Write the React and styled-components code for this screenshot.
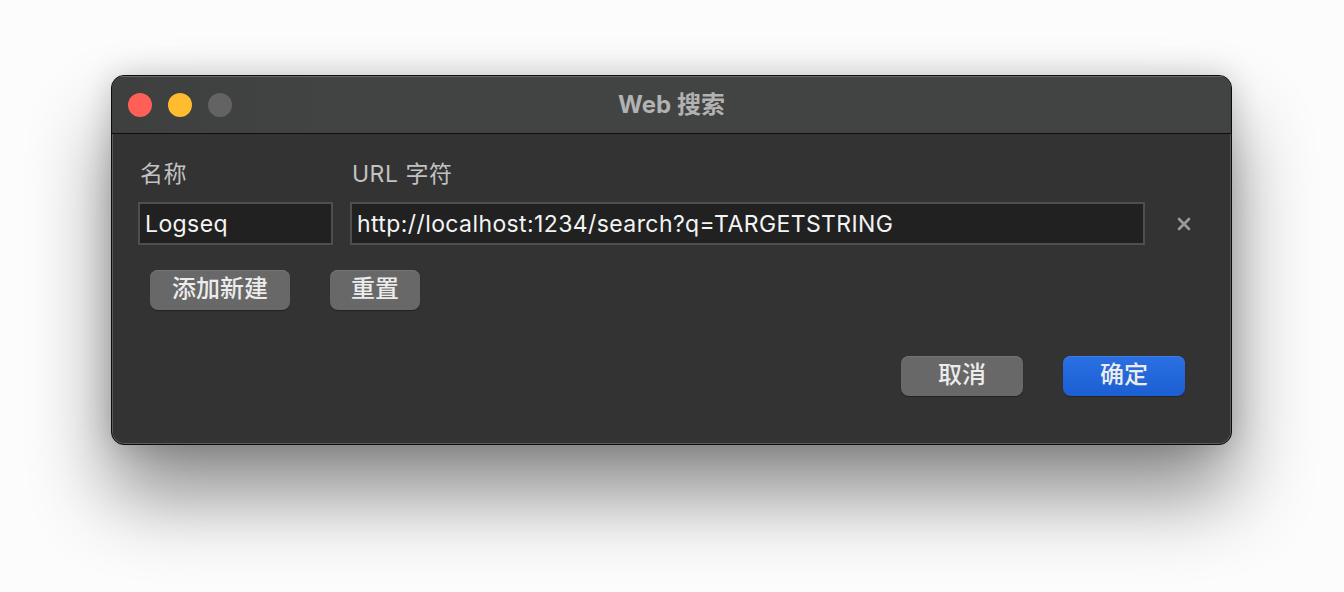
import React from 'react'
import styled, { createGlobalStyle } from 'styled-components'

const GlobalStyle = createGlobalStyle`
    body {
        margin: 0;
        background: #fcfcfc;
        font-family: Inter, "Noto Sans CJK SC", sans-serif;
    }
`

const Page = styled.div`
    width: 1344px;
    height: 592px;
    padding: 75px 0 0 111px;
    box-sizing: border-box;
    overflow: hidden;
`

const Window = styled.div`
    width: 1121px;
    height: 370px;
    box-sizing: border-box;
    border: 1px solid #0c0c0c;
    border-radius: 13px;
    background: #333333;
    box-shadow: inset 0 0 0 1px #5c5c5c, 0 50px 80px rgba(0, 0, 0, 0.45), 0 0 30px rgba(0, 0, 0, 0.18);
    display: flex;
    flex-direction: column;
    overflow: hidden;
`

const TitleBar = styled.div`
    height: 56px;
    flex-shrink: 0;
    display: flex;
    align-items: center;
    padding-left: 16px;
    background: linear-gradient(90deg, #3e3f3f, #424443 20%, #424443);
    border-top: 1px solid #6a6a6a;
    border-bottom: 1px solid #0e0e0e;
    position: relative;
`

const Lights = styled.div`
    display: flex;
    gap: 16px;
`

const Light = styled.span`
    width: 24px;
    height: 24px;
    border-radius: 50%;
    background: ${p => p.color};
`

const Title = styled.div`
    position: absolute;
    left: 0;
    right: 0;
    padding-bottom: 6px;
    text-align: center;
    font-size: 24px;
    font-weight: 700;
    color: #b2b2b2;
    pointer-events: none;
`

const Body = styled.div`
    flex: 1;
    padding: 27px 0 0 26px;
    display: flex;
    flex-direction: column;
`

const FieldRow = styled.div`
    display: flex;
    align-items: flex-end;
`

const Field = styled.div`
    display: flex;
    flex-direction: column;
    gap: 14px;
    margin-right: 17px;
`

const Label = styled.div`
    font-size: 23px;
    line-height: 27px;
    letter-spacing: 0.5px;
    color: #c2c2c2;
    padding-left: 2px;
`

const Input = styled.div`
    width: ${p => p.w}px;
    height: 43px;
    box-sizing: border-box;
    background: #212121;
    border: 2px solid #4f4f4f;
    color: #f4f4f4;
    font-size: 23px;
    letter-spacing: 0.4px;
    display: flex;
    align-items: center;
    padding-left: 5px;
`

const Remove = styled.div`
    width: 22px;
    height: 43px;
    display: flex;
    align-items: center;
    justify-content: center;
    margin-left: 11px;
    color: #9b9b9b;
`

const ButtonRow = styled.div`
    display: flex;
    gap: 40px;
    padding-left: ${p => p.indent || 0}px;
    margin-top: ${p => p.top}px;
    justify-content: ${p => p.end ? 'flex-end' : 'flex-start'};
    padding-right: ${p => p.end ? 46 : 0}px;
`

const Button = styled.div`
    width: ${p => p.w}px;
    height: 40px;
    box-sizing: border-box;
    border-radius: 8px;
    display: flex;
    align-items: center;
    justify-content: center;
    font-size: 24px;
    font-weight: 500;
    line-height: 1;
    padding-bottom: 2px;
    color: #ececec;
    background: ${p => p.primary ? 'linear-gradient(180deg, #2b70e2, #1b5fd3)' : '#686868'};
    box-shadow: 0 1px 1px rgba(0, 0, 0, 0.35), inset 0 1px 0 ${p => p.primary ? '#3d7ee8' : '#747474'};
`

export default function App() {
    return (
        <Page>
            <GlobalStyle />
            <Window>
                <TitleBar>
                    <Lights>
                        <Light color="#fe5f57" />
                        <Light color="#febc2e" />
                        <Light color="#626362" />
                    </Lights>
                    <Title>Web 搜索</Title>
                </TitleBar>
                <Body>
                    <FieldRow>
                        <Field>
                            <Label>名称</Label>
                            <Input w={195}>Logseq</Input>
                        </Field>
                        <Field>
                            <Label>URL 字符</Label>
                            <Input w={795}>http://localhost:1234/search?q=TARGETSTRING</Input>
                        </Field>
                        <Remove>
                            <svg width="14" height="14" viewBox="0 0 14 14">
                                <path d="M2 2 L12 12 M12 2 L2 12" stroke="currentColor" strokeWidth="2.6" strokeLinecap="round" />
                            </svg>
                        </Remove>
                    </FieldRow>
                    <ButtonRow indent={12} top={25}>
                        <Button w={140}>添加新建</Button>
                        <Button w={90}>重置</Button>
                    </ButtonRow>
                    <ButtonRow end top={46}>
                        <Button w={122}>取消</Button>
                        <Button w={122} primary>确定</Button>
                    </ButtonRow>
                </Body>
            </Window>
        </Page>
    )
}
